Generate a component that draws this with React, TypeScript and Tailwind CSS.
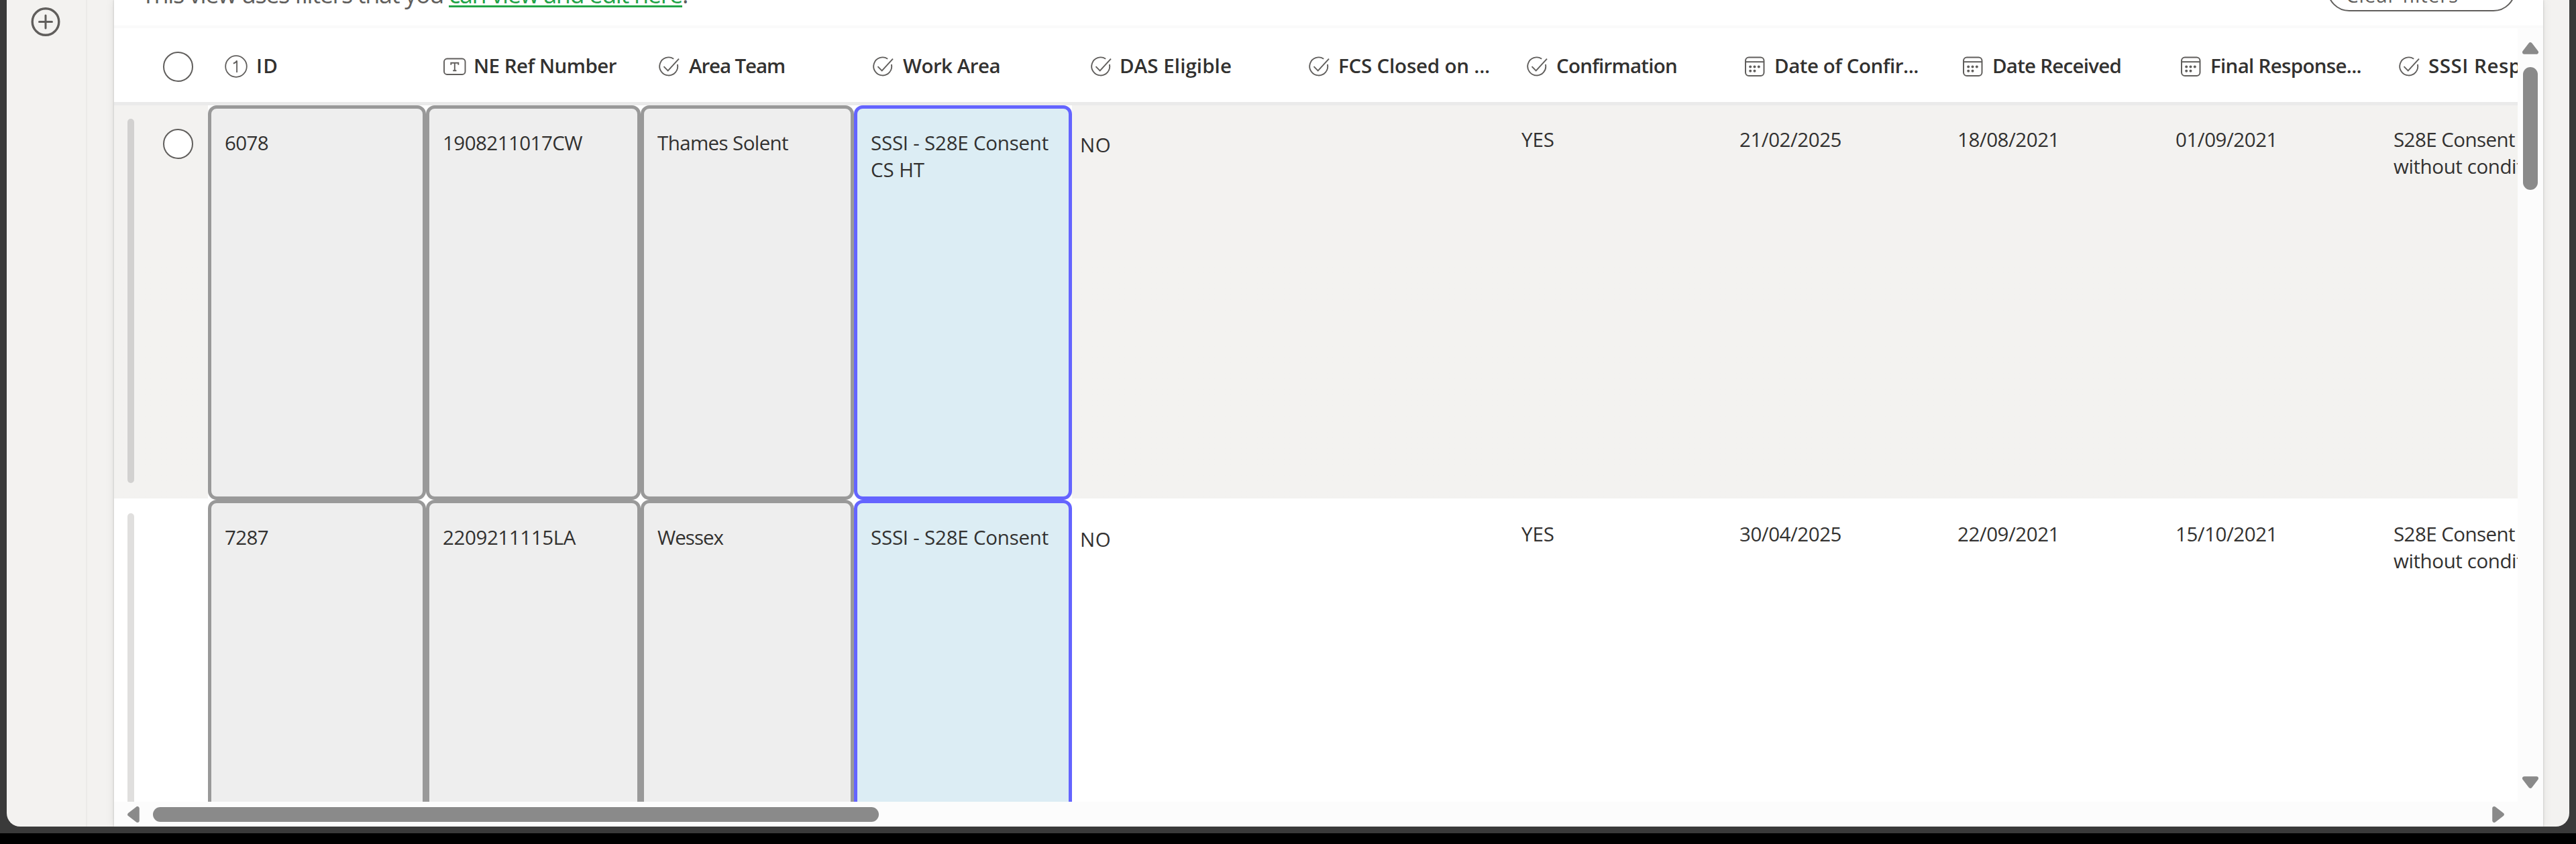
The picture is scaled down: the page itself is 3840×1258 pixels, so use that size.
import { useLayoutEffect, useRef, useState, type ReactNode } from "react";

/* Text that is tracked so its advance equals `w` pixels. */
function Fit({ w, children, className = "" }: { w: number; children: string; className?: string }) {
  const ref = useRef<HTMLSpanElement>(null);
  const [ls, setLs] = useState(0);
  useLayoutEffect(() => {
    if (ref.current) {
      const natural = ref.current.getBoundingClientRect().width;
      setLs((w - natural) / children.length);
    }
  }, [w, children]);
  return (
    <span ref={ref} className={`inline-block whitespace-pre ${className}`} style={{ letterSpacing: ls }}>
      {children}
    </span>
  );
}

function ChoiceIcon() {
  return (
    <svg viewBox="0 0 36 36" className="size-9 shrink-0" fill="none" stroke="#605e5c" strokeWidth="1.9">
      <path d="M25.2 6.7A13.5 13.5 0 1 0 30.9 15" />
      <path d="M10.5 18.2l6.2 6.2L33 6.6" />
    </svg>
  );
}

function CalendarIcon() {
  return (
    <svg viewBox="0 0 36 36" className="size-9 shrink-0" fill="none" stroke="#605e5c" strokeWidth="2">
      <rect x="4" y="4.5" width="27.5" height="27.5" rx="5" />
      <path d="M4 11.2h27.5" />
      <g fill="#605e5c" stroke="none">
        <circle cx="11.2" cy="18.6" r="2" />
        <circle cx="17.5" cy="18.6" r="2" />
        <circle cx="23.8" cy="18.6" r="2" />
        <circle cx="11.2" cy="24.8" r="2" />
        <circle cx="17.5" cy="24.8" r="2" />
      </g>
    </svg>
  );
}

function NumberIcon() {
  return (
    <svg viewBox="0 0 36 36" className="size-9 shrink-0" fill="none" stroke="#605e5c" strokeWidth="1.8">
      <circle cx="18" cy="18" r="15.8" />
      <path d="M13.8 13.6c2.8-.8 4.4-2 5.3-4.2V27" />
    </svg>
  );
}

function TextIcon() {
  return (
    <svg viewBox="0 0 36 36" className="size-9 shrink-0" fill="none" stroke="#605e5c" strokeWidth="1.9">
      <rect x="2" y="6.5" width="31.5" height="23.5" rx="4.5" />
      <path d="M12.3 15.7v-2.9h11v2.9M17.8 12.8v11.2M15.2 24.2h5.2" />
    </svg>
  );
}

function Arrow({ className }: { className: string }) {
  return (
    <svg viewBox="0 0 24 18" className={className} fill="#8a8a8a" stroke="#8a8a8a" strokeWidth="6" strokeLinejoin="round">
      <path d="M12 3.2L21 14.8H3z" />
    </svg>
  );
}

type Column = { label: string; w: number; icon: "num" | "text" | "choice" | "date"; cls: string };

const columns: Column[] = [
  { label: "ID", w: 33, icon: "num", cls: "w-[325px] pl-6 gap-3" },
  { label: "NE Ref Number", w: 213, icon: "text", cls: "w-[318px] pl-[25px] gap-2.5" },
  { label: "Area Team", w: 143, icon: "choice", cls: "w-[319px] pl-[26px] gap-3" },
  { label: "Work Area", w: 145, icon: "choice", cls: "w-[325px] pl-[26px] gap-3" },
  { label: "DAS Eligible", w: 167, icon: "choice", cls: "w-[325px] pl-[26px] gap-2.5" },
  { label: "FCS Closed on ...", w: 226, icon: "choice", cls: "w-[325px] pl-[26px] gap-[11px]" },
  { label: "Confirmation", w: 180, icon: "choice", cls: "w-[325px] pl-[26px] gap-[11px]" },
  { label: "Date of Confir...", w: 215, icon: "date", cls: "w-[325px] pl-[26px] gap-[11px]" },
  { label: "Date Received", w: 192, icon: "date", cls: "w-[325px] pl-[26px] gap-[11px]" },
  { label: "Final Response...", w: 225, icon: "date", cls: "w-[325px] pl-[26px] gap-[11px]" },
  { label: "SSSI Response", w: 209, icon: "choice", cls: "w-[325px] pl-[26px] gap-[11px]" },
];

const icons: Record<Column["icon"], ReactNode> = {
  num: <NumberIcon />,
  text: <TextIcon />,
  choice: <ChoiceIcon />,
  date: <CalendarIcon />,
};

type Line = [string, number];

function Card({ lines, cls }: { lines: Line[]; cls: string }) {
  return (
    <div className="h-full shrink-0 bg-white">
      <div className={`h-full rounded-[13px] border-[5px] pl-5 pt-[31px] ${cls}`}>
        {lines.map(([t, w]) => (
          <div key={t} className="h-10">
            <Fit w={w}>{t}</Fit>
          </div>
        ))}
      </div>
    </div>
  );
}

function Row({
  id,
  refNo,
  team,
  area,
  dates,
  selectable = false,
}: {
  id: string;
  refNo: Line;
  team: Line;
  area: Line[];
  dates: string[];
  selectable?: boolean;
}) {
  return (
    <div className={`flex h-[588px] shrink-0 ${selectable ? "bg-linear-to-b from-[#f3f2f0] from-[586px] to-white to-[586px]" : "bg-white"}`}>
      <div className="flex w-[140px] shrink-0 pl-5">
        <div className={`mt-5 h-[543px] w-2.5 rounded-full ${selectable ? "bg-[#d2d1d0]" : "bg-[#e0dfde]"}`} />
        {selectable && <div className="ml-[43px] mt-[35px] size-[45px] rounded-full border-2 border-[#605e5c] bg-white" />}
      </div>
      <Card lines={[[id, 65]]} cls="w-[325px] border-[#999] bg-[#eee]" />
      <Card lines={[refNo]} cls="w-[320px] border-[#999] bg-[#eee]" />
      <Card lines={[team]} cls="w-[318px] border-[#999] bg-[#eee]" />
      <Card lines={area} cls="w-[325px] border-[#6464ff] bg-[#dcedf4]" />
      <div className="w-[670px] shrink-0 pl-3 pt-[39px]">
        <Fit w={46}>NO</Fit>
      </div>
      <div className="w-[325px] shrink-0 pt-[31px]">
        <Fit w={49}>YES</Fit>
      </div>
      {dates.map((d) => (
        <div key={d} className="w-[325px] shrink-0 pt-[31px]">
          <Fit w={152}>{d}</Fit>
        </div>
      ))}
      <div className="shrink-0 pt-[31px]">
        <div className="h-10">
          <Fit w={181}>S28E Consent</Fit>
        </div>
        <div className="h-10">
          <Fit w={249}>without conditions</Fit>
        </div>
      </div>
    </div>
  );
}

export default function App() {
  return (
    <div className="h-[1258px] w-[3840px] overflow-hidden bg-black font-['Open_Sans','Noto_Sans',sans-serif] text-[29.5px] leading-10 text-[#323130]">
      <div className="h-[1242px] bg-[#3a3a3a] px-2.5 pb-2.5">
        <div className="flex h-full overflow-hidden rounded-b-[20px] bg-[#f3f2f0]">
          <aside className="flex w-[120px] shrink-0 justify-center border-r-2 border-[#ebeae8] pt-[11px]">
            <svg viewBox="0 0 44 44" className="-ml-0.5 size-11" fill="none" stroke="#605e5c">
              <circle cx="22" cy="21.5" r="19.8" strokeWidth="3.4" />
              <path d="M22 12v19M12.5 21.5h19" strokeWidth="3" strokeLinecap="round" />
            </svg>
          </aside>

          <main className="ml-10 flex w-[3621px] shrink-0 flex-col bg-white shadow-[0_0_14px_rgba(0,0,0,0.08),0_0_3px_rgba(0,0,0,0.2)]">
            <div className="flex h-[42px] shrink-0 items-end justify-between overflow-hidden border-b-4 border-[#fafafa] pl-[45px] pr-[41px]">
              <p className="-ml-1 mb-[22px] whitespace-pre text-[36px] leading-[48px] text-[#605e5c]">
                <Fit w={458}>{"This view uses filters that you "}</Fit>
                <Fit w={348} className="text-[#22a447] underline decoration-[3px] underline-offset-[3px] [text-decoration-skip-ink:none]">
                  can view and edit here
                </Fit>
                .
              </p>
              <button className="mb-[21px] flex h-[66px] w-[281px] shrink-0 items-center rounded-full border-2 border-[#605e5c] pl-[26px] pt-[18px] text-[#605e5c]">
                <Fit w={168}>Clear filters</Fit>
              </button>
            </div>

            <div className="flex min-h-0 flex-1">
              <div className="flex min-w-0 flex-1 flex-col">
                <div className="flex min-h-0 flex-1 flex-col overflow-hidden">
                  <div className="flex h-[115px] shrink-0 items-center border-b-[5px] border-[#eaeaea] pt-1">
                    <div className="ml-[73px] mr-[22px] size-[45px] shrink-0 rounded-full border-2 border-[#605e5c]" />
                    {columns.map((c) => (
                      <div key={c.label} className={`flex shrink-0 items-center ${c.cls}`}>
                        {icons[c.icon]}
                        <Fit w={c.w} className="mb-0.5 font-semibold">
                          {c.label}
                        </Fit>
                      </div>
                    ))}
                  </div>
                  <Row
                    selectable
                    id="6078"
                    refNo={["1908211017CW", 208]}
                    team={["Thames Solent", 195]}
                    area={[
                      ["SSSI - S28E Consent", 265],
                      ["CS HT", 80],
                    ]}
                    dates={["21/02/2025", "18/08/2021", "01/09/2021"]}
                  />
                  <Row
                    id="7287"
                    refNo={["2209211115LA", 198]}
                    team={["Wessex", 98]}
                    area={[["SSSI - S28E Consent", 265]]}
                    dates={["30/04/2025", "22/09/2021", "15/10/2021"]}
                  />
                </div>
                <div className="flex h-[37px] shrink-0 items-center bg-[#fcfcfc] pl-[17px] pr-[17px]">
                  <Arrow className="h-[18px] w-6 -rotate-90" />
                  <div className="ml-[17px] h-[22px] w-[1082px] rounded-full bg-[#8a8a8a]" />
                  <Arrow className="ml-auto h-[18px] w-6 rotate-90" />
                </div>
              </div>
              <div className="flex w-[38px] shrink-0 flex-col items-center bg-[#fcfcfc] pb-[57px] pt-[21px]">
                <Arrow className="h-[18px] w-6 shrink-0" />
                <div className="mt-[19px] h-[183px] w-[22px] rounded-full bg-[#8a8a8a]" />
                <Arrow className="mt-auto h-[18px] w-6 rotate-180" />
              </div>
            </div>
          </main>
        </div>
      </div>
    </div>
  );
}
